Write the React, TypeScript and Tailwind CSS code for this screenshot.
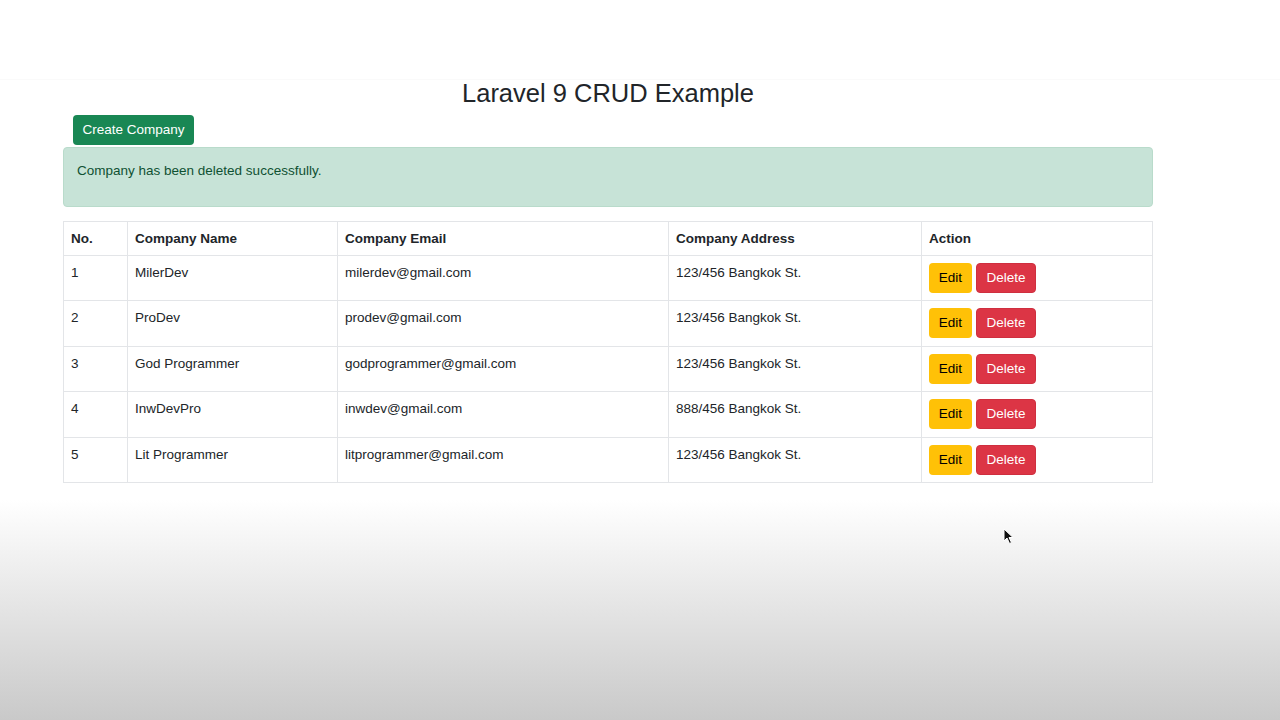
const companies = [
  { id: 1, name: "MilerDev", email: "milerdev@gmail.com", address: "123/456 Bangkok St." },
  { id: 2, name: "ProDev", email: "prodev@gmail.com", address: "123/456 Bangkok St." },
  { id: 3, name: "God Programmer", email: "godprogrammer@gmail.com", address: "123/456 Bangkok St." },
  { id: 4, name: "InwDevPro", email: "inwdev@gmail.com", address: "888/456 Bangkok St." },
  { id: 5, name: "Lit Programmer", email: "litprogrammer@gmail.com", address: "123/456 Bangkok St." },
];

function Cursor() {
  return (
    <svg
      className="pointer-events-none absolute left-[1003px] top-[528px]"
      width="12"
      height="17"
      viewBox="0 0 12 17"
    >
      <path d="M1 1 L1 13 L4 10 L6.5 15.5 L8.5 14.5 L6 9.5 L10 9.5 Z" fill="#111" stroke="#fff" strokeWidth="1" />
    </svg>
  );
}

export default function App() {
  return (
    <div className="relative min-h-[720px] overflow-hidden bg-[linear-gradient(to_bottom,#ffffff_0px,#ffffff_500px,#c9c9c9_720px)] font-['Liberation_Sans',Arial,sans-serif] text-[13.5px] text-[#212529]">
      <div className="h-[80px] border-b border-[#fafafa] bg-white" />
      <div className="ml-[63px] w-[1090px]">
        <h2 className="text-center text-[25.5px] leading-[26px] text-[#212529]">Laravel 9 CRUD Example</h2>

        <div className="mt-[9px] pl-[10px]">
          <button className="h-[30px] w-[121px] rounded-[4px] bg-[#198754] pt-[1px] text-[13.5px] text-white">
            Create Company
          </button>
        </div>

        <div className="mt-[2px] h-[60px] rounded-[4px] border border-[#b9dbcb] bg-[#c7e3d7] px-[13px] pt-[13px] leading-[20px] text-[#0f5132]">
          Company has been deleted successfully.
        </div>

        <table className="mt-[14px] w-full border-collapse border border-[#e3e5e8] bg-white text-left">
          <thead>
            <tr className="border-b border-[#e3e5e8]">
              <th className="w-[64px] border-r border-[#e3e5e8] px-[7px] pb-[6px] pt-[7px] font-bold leading-[20px]">No.</th>
              <th className="w-[210px] border-r border-[#e3e5e8] px-[7px] pb-[6px] pt-[7px] font-bold leading-[20px]">Company Name</th>
              <th className="w-[331px] border-r border-[#e3e5e8] px-[7px] pb-[6px] pt-[7px] font-bold leading-[20px]">Company Email</th>
              <th className="w-[253px] border-r border-[#e3e5e8] px-[7px] pb-[6px] pt-[7px] font-bold leading-[20px]">Company Address</th>
              <th className="px-[7px] pb-[6px] pt-[7px] font-bold leading-[20px]">Action</th>
            </tr>
          </thead>
          <tbody>
            {companies.map((c, i) => (
              <tr key={c.id} className="border-b border-[#e3e5e8] align-top">
                <td className="border-r border-[#e3e5e8] px-[7px] pb-[7px] pt-[7px] leading-[20px]">{c.id}</td>
                <td className="border-r border-[#e3e5e8] px-[7px] pb-[7px] pt-[7px] leading-[20px]">{c.name}</td>
                <td className="border-r border-[#e3e5e8] px-[7px] pb-[7px] pt-[7px] leading-[20px]">{c.email}</td>
                <td className="border-r border-[#e3e5e8] px-[7px] pb-[7px] pt-[7px] leading-[20px]">{c.address}</td>
                <td className={i % 2 === 1 ? "px-[7px] pb-[8px] pt-[7px]" : "px-[7px] pb-[7px] pt-[7px]"}>
                  <div className="flex gap-[4px]">
                    <button className="h-[30px] w-[43px] rounded-[4px] bg-[#ffc107] text-[13.5px] text-black">Edit</button>
                    <button className="h-[30px] w-[60px] rounded-[4px] border border-[#cf2f3f] bg-[#dc3545] text-[13.5px] text-white">
                      Delete
                    </button>
                  </div>
                </td>
              </tr>
            ))}
          </tbody>
        </table>
      </div>
      <Cursor />
    </div>
  );
}
